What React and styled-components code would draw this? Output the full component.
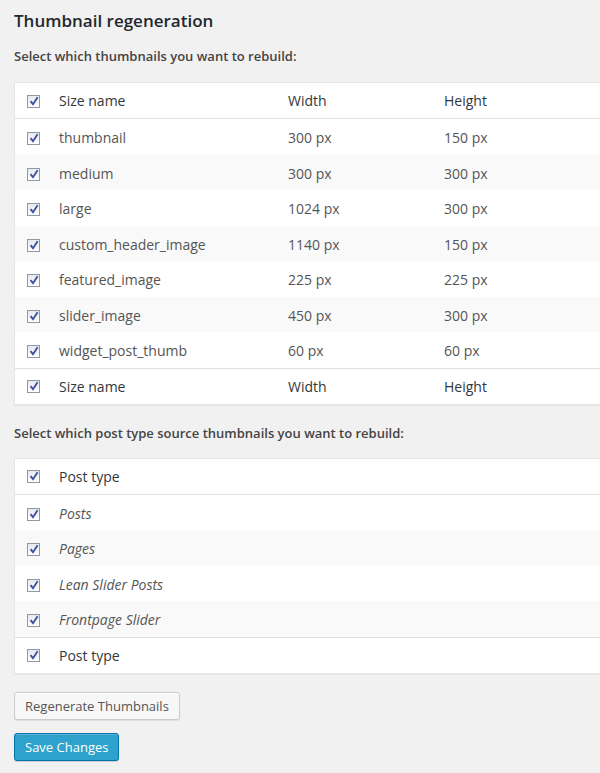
import React from 'react';
import styled, { createGlobalStyle } from 'styled-components';

const GlobalStyle = createGlobalStyle`
  html, body {
    margin: 0;
    padding: 0;
    background: #f1f1f1;
  }
  body {
    font-family: "Open Sans", "Liberation Sans", sans-serif;
    color: #444;
    font-size: 13px;
  }
`;

// the tables run past the right edge of the screen in the screenshot
const Viewport = styled.div`
  width: 100%;
  overflow: hidden;
`;

const Wrap = styled.div`
  padding: 9px 0 20px 14px;
  width: 620px;
`;

const Title = styled.h2`
  margin: 0;
  font-size: 17px;
  font-weight: 600;
  color: #23282d;
  line-height: 24px;
`;

const Label = styled.p`
  margin: ${({ top }) => top}px 0 0;
  font-size: 13px;
  font-weight: 600;
  color: #444;
  line-height: 20px;
`;

const Table = styled.table`
  margin-top: ${({ top }) => top}px;
  width: 100%;
  border-collapse: separate;
  border-spacing: 0;
  background: #fff;
  border: 1px solid #e5e5e5;
  box-shadow: 0 1px 1px rgba(0, 0, 0, 0.04);
`;

const HeadCell = styled.th`
  text-align: left;
  font-weight: 400;
  font-size: 14px;
  color: #32373c;
  height: 35px;
  padding: 0 0 0 ${({ pad }) => pad}px;
  width: ${({ w }) => w};
  border-${({ edge }) => edge}: 1px solid #e1e1e1;
  vertical-align: middle;
`;

const Row = styled.tr`
  background: ${({ alt }) => (alt ? '#f9f9f9' : '#fff')};
`;

const Cell = styled.td`
  font-size: 14px;
  color: #555;
  height: 33.5px;
  padding: 2px 0 0 ${({ pad }) => pad}px;
  font-style: ${({ italic }) => (italic ? 'italic' : 'normal')};
  vertical-align: middle;
`;

const Box = styled.span`
  display: inline-block;
  width: 11px;
  height: 11px;
  border: 1px solid #8e99a8;
  background: linear-gradient(#e6e9ee, #fff);
  position: relative;
  vertical-align: middle;
  margin-top: -2px;
  svg {
    position: absolute;
    left: 1px;
    top: 0px;
  }
`;

const Check = () => (
  <Box>
    <svg width="10" height="10" viewBox="0 0 10 10">
      <path d="M1.5 5.2 L4 8.2 L8.6 1.2" fill="none" stroke="#3b4ea0" strokeWidth="1.8" />
    </svg>
  </Box>
);

const Buttons = styled.div`
  margin-top: 18px;
  display: flex;
  flex-direction: column;
  align-items: flex-start;
  gap: 13px;
`;

const Button = styled.button`
  font-family: "Open Sans", "Liberation Sans", sans-serif;
  font-size: 13px;
  height: 28px;
  line-height: 26px;
  padding: 0 10px;
  border-radius: 3px;
  cursor: pointer;
  border: 1px solid ${({ primary }) => (primary ? '#0073aa' : '#ccc')};
  background: ${({ primary }) => (primary ? '#2ea2cc' : '#f7f7f7')};
  color: ${({ primary }) => (primary ? '#fff' : '#555')};
  box-shadow: ${({ primary }) =>
    primary ? 'inset 0 1px 0 rgba(120,200,230,.5), 0 1px 0 rgba(0,0,0,.15)' : 'inset 0 1px 0 #fff, 0 1px 0 rgba(0,0,0,.08)'};
`;

const sizes = [
  ['thumbnail', '300 px', '150 px'],
  ['medium', '300 px', '300 px'],
  ['large', '1024 px', '300 px'],
  ['custom_header_image', '1140 px', '150 px'],
  ['featured_image', '225 px', '225 px'],
  ['slider_image', '450 px', '300 px'],
  ['widget_post_thumb', '60 px', '60 px'],
];

const postTypes = ['Posts', 'Pages', 'Lean Slider Posts', 'Frontpage Slider'];

const SizeHead = ({ edge }) => (
  <tr>
    <HeadCell pad={12} w="32px" edge={edge}><Check /></HeadCell>
    <HeadCell pad={0} w="229px" edge={edge}>Size name</HeadCell>
    <HeadCell pad={0} w="156px" edge={edge}>Width</HeadCell>
    <HeadCell pad={0} edge={edge}>Height</HeadCell>
  </tr>
);

const TypeHead = ({ edge }) => (
  <tr>
    <HeadCell pad={12} w="32px" edge={edge}><Check /></HeadCell>
    <HeadCell pad={0} edge={edge}>Post type</HeadCell>
  </tr>
);

export default function App() {
  return (
    <Viewport>
      <GlobalStyle />
      <Wrap>
        <Title>Thumbnail regeneration</Title>
        <Label top={13}>Select which thumbnails you want to rebuild:</Label>
        <Table top={16}>
          <thead><SizeHead edge="bottom" /></thead>
          <tbody>
            {sizes.map(([name, w, h], i) => (
              <Row key={name} alt={i % 2 === 1}>
                <Cell pad={12}><Check /></Cell>
                <Cell pad={0}>{name}</Cell>
                <Cell pad={0}>{w}</Cell>
                <Cell pad={0}>{h}</Cell>
              </Row>
            ))}
          </tbody>
          <tfoot><SizeHead edge="top" /></tfoot>
        </Table>
        <Label top={18}>Select which post type source thumbnails you want to rebuild:</Label>
        <Table top={15}>
          <thead><TypeHead edge="bottom" /></thead>
          <tbody>
            {postTypes.map((t, i) => (
              <Row key={t} alt={i % 2 === 1}>
                <Cell pad={12}><Check /></Cell>
                <Cell pad={0} italic>{t}</Cell>
              </Row>
            ))}
          </tbody>
          <tfoot><TypeHead edge="top" /></tfoot>
        </Table>
        <Buttons>
          <Button>Regenerate Thumbnails</Button>
          <Button primary>Save Changes</Button>
        </Buttons>
      </Wrap>
    </Viewport>
  );
}
